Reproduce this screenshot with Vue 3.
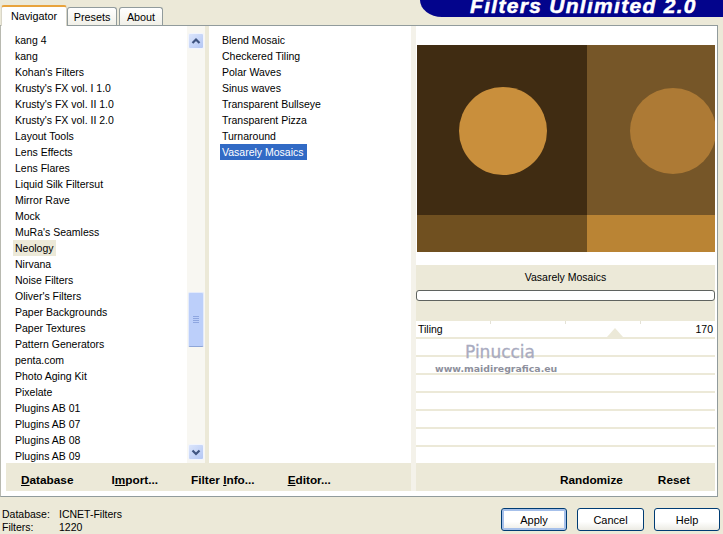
<script setup>
const filters = ["kang 4","kang","Kohan's Filters","Krusty's FX vol. I 1.0","Krusty's FX vol. II 1.0","Krusty's FX vol. II 2.0","Layout Tools","Lens Effects","Lens Flares","Liquid Silk Filtersut","Mirror Rave","Mock","MuRa's Seamless","Neology","Nirvana","Noise Filters","Oliver's Filters","Paper Backgrounds","Paper Textures","Pattern Generators","penta.com","Photo Aging Kit","Pixelate","Plugins AB 01","Plugins AB 07","Plugins AB 08","Plugins AB 09"]
const effects = ["Blend Mosaic","Checkered Tiling","Polar Waves","Sinus waves","Transparent Bullseye","Transparent Pizza","Turnaround","Vasarely Mosaics"]
const rows = [1,2,3,4,5,6,7]
</script>

<template>
  <div class="app">
    <header class="top">
      <nav class="tabs">
        <div class="tab active">Navigator</div>
        <div class="tab presets">Presets</div>
        <div class="tab about">About</div>
      </nav>
      <div class="banner"><span>Filters Unlimited 2.0</span></div>
    </header>

    <section class="panel">
      <div class="left">
        <div class="lists">
          <ul class="list first">
            <li v-for="f in filters" :key="f"><span :class="{ marked: f === 'Neology' }">{{ f }}</span></li>
          </ul>
          <div class="scroll">
            <div class="sbtn">
              <svg width="14" height="14" viewBox="0 0 14 14"><path d="M3.5 9 L7 5.5 L10.5 9" fill="none" stroke="#3f5480" stroke-width="2.2"/></svg>
            </div>
            <div class="track">
              <div class="thumb"><i></i><i></i><i></i><i></i></div>
            </div>
            <div class="sbtn">
              <svg width="14" height="14" viewBox="0 0 14 14"><path d="M3.5 5.5 L7 9 L10.5 5.5" fill="none" stroke="#3f5480" stroke-width="2.2"/></svg>
            </div>
          </div>
          <div class="sep"></div>
          <ul class="list second">
            <li v-for="e in effects" :key="e"><span :class="{ selected: e === 'Vasarely Mosaics' }">{{ e }}</span></li>
          </ul>
        </div>
        <div class="foot leftfoot">
          <b class="f1"><u>D</u>atabase</b>
          <b class="f2">I<u>m</u>port...</b>
          <b class="f3">Filter <u>I</u>nfo...</b>
          <b class="f4"><u>E</u>ditor...</b>
        </div>
      </div>
      <div class="divider"></div>
      <div class="right">
        <svg class="preview" width="298" height="207" viewBox="0 0 298 207">
          <rect width="170" height="170" fill="#402c12"/>
          <rect x="170" width="128" height="170" fill="#765628"/>
          <circle cx="86" cy="86" r="44" fill="#c98f3c"/>
          <circle cx="256" cy="86" r="43" fill="#ad7a35"/>
          <rect y="170" width="170" height="37" fill="#705020"/>
          <rect x="170" y="170" width="128" height="37" fill="#ba8434"/>
        </svg>
        <div class="title">
          <div class="name">Vasarely Mosaics</div>
          <div class="bar"></div>
        </div>
        <div class="params">
          <div class="row tiling"><span>Tiling</span><span>170</span><em class="pointer"></em></div>
          <div v-for="r in rows" :key="r" class="row"></div>
          <div class="mark">
            <div class="mark1">Pinuccia</div>
            <div class="mark2">www.maidiregrafica.eu</div>
          </div>
        </div>
        <div class="foot rightfoot">
          <b>Randomize</b>
          <b>Reset</b>
        </div>
      </div>
    </section>

    <footer class="bottom">
      <div class="status">
        <div><span class="k">Database:</span>ICNET-Filters</div>
        <div><span class="k">Filters:</span>1220</div>
      </div>
      <div class="buttons">
        <button class="btn default">Apply</button>
        <button class="btn wide">Cancel</button>
        <button class="btn">Help</button>
      </div>
    </footer>
  </div>
</template>

<style scoped>
.app {
  width: 723px;
  height: 534px;
  overflow: hidden;
  background: #ece9d8;
  font-family: "Liberation Sans", Arial, sans-serif;
  font-size: 10.5px;
  color: #000;
}
.top {
  height: 25px;
  display: flex;
  justify-content: space-between;
}
.tabs {
  display: flex;
  align-items: flex-end;
  padding-left: 1px;
  position: relative;
  z-index: 1;
}
.tab {
  height: 17px;
  line-height: 18px;
  text-align: center;
  background: linear-gradient(#fff, #f1f0e8);
  border: 1px solid #919b9c;
  border-bottom: none;
  border-radius: 3px 3px 0 0;
  font-size: 10.8px;
}
.active {
  width: 64px;
  background: #fff;
  border: none;
  border-top: 2px solid #e8a33c;
  border-left: 1px solid #d9d6c8;
  border-right: 1px solid #d9d6c8;
  margin-bottom: -1px;
  height: 19px;
  line-height: 19px;
}
.presets { width: 48px; }
.about { width: 42px; margin-left: 2px; }
.banner {
  width: 303px;
  height: 17px;
  background: #03048c;
  border-bottom-left-radius: 22px 17px;
  overflow: hidden;
}
.banner span {
  display: block;
  margin-top: -6px;
  padding-left: 50px;
  color: #fff;
  font: italic bold 21px/24px "Liberation Sans", Arial, sans-serif;
  letter-spacing: 1.3px;
  -webkit-text-stroke: 0.5px #fff;
  white-space: nowrap;
}
.panel {
  width: 718px;
  height: 472px;
  box-sizing: border-box;
  background: #fff;
  border: 1px solid #919b9c;
  border-left-color: #b8b9b0;
  padding: 0 1px 5px 5px;
  display: flex;
}
.left { width: 405px; display: flex; flex-direction: column; }
.lists { height: 437px; display: flex; }
.list {
  list-style: none;
  margin: 0;
  padding: 6px 0 0;
  height: 437px;
  box-sizing: border-box;
  overflow: hidden;
}
.list li {
  height: 16px;
  line-height: 16px;
  white-space: nowrap;
}
.list span { display: inline-block; padding: 0 2px; }
.first { width: 181px; padding-left: 7px; }
.second { width: 202px; padding-left: 11px; }
.marked { background: #ece9d8; }
.list .selected { background: #316ac5; color: #fff; padding: 0 3px 0 2px; }
.scroll {
  width: 18px;
  padding: 7px 1px 3px 1px;
  box-sizing: border-box;
  background: #f8f7f2;
  display: flex;
  flex-direction: column;
}
.sbtn {
  height: 16px;
  width: 16px;
  border: 1px solid #f2f5fd;
  border-radius: 2px;
  box-sizing: border-box;
  background: linear-gradient(135deg, #dbe5fb, #b4c7f4);
  display: flex;
  align-items: center;
  justify-content: center;
  flex: none;
}
.track { flex: 1; padding-top: 243px; }
.thumb {
  height: 55px;
  width: 16px;
  box-sizing: border-box;
  background: #bccffa;
  border: 1px solid #e4ebfb;
  border-bottom-color: #8ea6d8;
  border-radius: 2px;
  display: flex;
  flex-direction: column;
  align-items: center;
  justify-content: center;
  gap: 1px;
}
.thumb i { display: block; width: 6px; height: 1px; background: #8ea6e0; }
.sep { width: 4px; background: #ece9d8; }
.foot {
  height: 28px;
  box-sizing: border-box;
  padding-top: 6px;
  background: #ece9d8;
  display: flex;
  align-items: center;
  font-size: 11.8px;
}
.foot b { white-space: nowrap; }
.leftfoot { padding-left: 15px; }
.f2 { margin-left: 38px; }
.f3 { margin-left: 33px; }
.f4 { margin-left: 33px; }
.divider { width: 5px; background: #f4f2ea; }
.right { width: 299px; display: flex; flex-direction: column; }
.preview { display: block; margin: 19px 0 13px 1px; flex: none; }
.title { height: 56px; background: #ece9d8; box-sizing: border-box; padding-top: 4px; flex: none; }
.name { text-align: center; height: 16px; line-height: 16px; }
.bar {
  margin-top: 5px;
  height: 11px;
  box-sizing: border-box;
  background: #fff;
  border: 1px solid #5f6360;
  border-radius: 3px;
}
.params { position: relative; height: 142px; flex: none; overflow: hidden; }
.row {
  height: 18px;
  box-sizing: border-box;
  border-bottom: 2px solid #ece9d8;
}
.tiling {
  display: flex;
  justify-content: space-between;
  padding: 0 2px;
  line-height: 16px;
  position: relative;
  background: repeating-linear-gradient(90deg, transparent 0 74px, #e4e2d6 74px 75px) no-repeat 0 0 / 100% 3px;
}
.pointer {
  position: absolute;
  left: 191px;
  top: 7px;
  width: 0;
  height: 0;
  border-left: 8px solid transparent;
  border-right: 8px solid transparent;
  border-bottom: 9px solid #ece9d8;
}
.mark { position: absolute; left: 19px; top: 21px; width: 122px; }
.mark1 {
  color: #a9abc0;
  padding-left: 30px;
  font: 17px/20px "DejaVu Sans", sans-serif;
  -webkit-text-stroke: 0.3px #a9abc0;
  white-space: nowrap;
}
.mark2 {
  color: #8d8f9c;
  font: bold 9.4px/13px "DejaVu Sans", sans-serif;
  white-space: nowrap;
}
.rightfoot { justify-content: flex-end; padding-right: 25px; gap: 35px; }
.bottom {
  height: 37px;
  display: flex;
  justify-content: space-between;
}
.status { padding: 11px 0 0 2px; line-height: 13px; }
.k { display: inline-block; width: 57px; }
.buttons { display: flex; gap: 10px; padding: 11px 3px 0 0; }
.btn {
  width: 66px;
  height: 23px;
  padding: 0;
  font: 11px "Liberation Sans", Arial, sans-serif;
  color: #000;
  background: linear-gradient(#fff 60%, #ecebe4);
  border: 1px solid #003c74;
  border-radius: 3px;
}
.wide { width: 67px; }
.default { box-shadow: inset 0 0 0 2px #a6c0ea; }
</style>

<style>
html, body { margin: 0; background: #ece9d8; }
</style>
